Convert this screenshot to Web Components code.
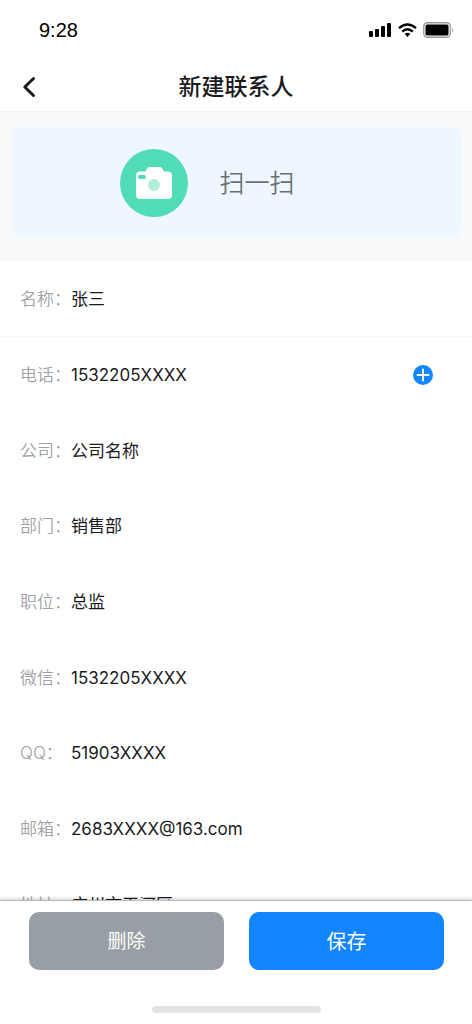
<!DOCTYPE html>
<html lang="zh-CN">
<head>
<meta charset="utf-8">
<meta name="viewport" content="width=device-width, initial-scale=1">
<title>新建联系人</title>
<style>
  html, body { margin: 0; height: 100%; }
  body { background: #fff; color: #1b1b1d; font-family: Inter, "Noto Sans CJK SC", sans-serif; }
</style>
</head>
<body>
<contact-page></contact-page>

<script>
const define = (name, html, setup) => customElements.define(name, class extends HTMLElement {
  connectedCallback() {
    if (this.shadowRoot) return;
    const template = document.createElement('template');
    template.innerHTML = html;
    this.attachShadow({ mode: 'open' }).append(template.content.cloneNode(true));
    if (setup) setup(this, this.shadowRoot);
  }
});

define('status-bar', `
  <style>
    :host { display: flex; align-items: center; justify-content: space-between; height: 60px;
      padding: 0 18px 0 39px; box-sizing: border-box; color: #000;
      font: 20px/24px "Liberation Sans", sans-serif; }
    .icons { display: flex; align-items: center; gap: 6px; }
    svg { display: block; }
  </style>
  <span>9:28</span>
  <div class="icons">
    <svg width="23" height="15" viewBox="0 0 23 15"><rect x="0" y="8" width="4" height="6" rx="1"/><rect x="6" y="6" width="4" height="8" rx="1"/><rect x="12" y="3" width="4" height="11" rx="1"/><rect x="18" y="0" width="4" height="14" rx="1"/></svg>
    <svg width="19" height="15" viewBox="0 0 19 15" fill="none" stroke="#000" stroke-width="2.400"><path d="M1 5.200Q9.500-2.200 18 5.200"/><path d="M4.200 8.700Q9.500 4 14.800 8.700"/><path d="M6.600 10.800Q9.500 8.700 12.400 10.800L9.500 14Z" fill="#000" stroke="none"/></svg>
    <svg width="31" height="16" viewBox="0 0 31 16"><rect x=".75" y=".75" width="26.500" height="14.500" rx="3.500" fill="none" stroke="#999" stroke-width="1.300"/><rect x="2.500" y="2.500" width="23" height="11" rx="1.500"/><path d="M29 5.500Q31 8 29 10.500Z" fill="#999"/></svg>
  </div>`);

define('nav-header', `
  <style>
    :host { display: grid; grid-template-columns: 60px 1fr 60px; align-items: center; height: 51px;
      padding-top: 2px; box-sizing: border-box; }
    button { display: flex; align-items: center; width: 60px; height: 48px; padding: 0 0 0 22px;
      border: 0; background: none; color: inherit; }
    h1 { margin: 0; text-align: center; font-size: 23px; line-height: 32px; font-weight: 500; }
  </style>
  <button type="button" aria-label="返回"><svg width="14" height="22" viewBox="0 0 14 22" fill="none" stroke="currentColor" stroke-width="3" stroke-linecap="round" stroke-linejoin="round"><path d="M11.500 2.500L2.800 11L11.500 19.500"/></svg></button>
  <h1><slot></slot></h1>`);

define('scan-card', `
  <style>
    :host { display: block; padding: 15px 11px 23px 12px; background: #f7f9fa; border-top: 1px solid #f1f3f4; }
    button { display: flex; align-items: center; justify-content: center; gap: 31px; width: 100%;
      height: 111px; padding: 0 58px 0 0; border: 0; border-radius: 10px;
      background: #eef6ff; color: #6b6f73; font: inherit; font-size: 25px; font-weight: 350; line-height: 36px; }
    svg { display: block; }
  </style>
  <button type="button">
    <svg width="68" height="68" viewBox="0 0 68 68"><circle cx="34" cy="34" r="34" fill="#50dcb6"/><path d="M20 22.500H24.500Q26 22.500 26.500 20.500Q27 18 29 18H40Q42 18 42.800 20.500Q43.500 22.500 45 22.500H48Q52 22.500 52 26.500V46Q52 50 48 50H20Q16 50 16 46V26.500Q16 22.500 20 22.500Z" fill="#fff"/><rect x="18" y="26" width="8" height="4" rx="2" fill="#50dcb6"/><circle cx="34" cy="36" r="6" fill="#b4eddb"/></svg>
    <span><slot></slot></span>
  </button>`);

define('contact-field', `
  <style>
    :host { display: flex; align-items: center; padding: 1px 39px 0 20px; box-sizing: border-box; }
    :host([divided]) { border-bottom: 1px solid #f8f8f9; }
    label { flex: 0 0 51px; white-space: nowrap; color: #a0a2a6; font-size: 17px; font-weight: 350; line-height: 26px; }
    .colon { font-family: "Noto Sans CJK SC", sans-serif; line-height: 1; }
    input { flex: 1; min-width: 0; height: 28px; margin: 0; padding: 0; border: 0; outline: 0;
      background: none; color: inherit; font: inherit; font-size: 17px; line-height: 28px; }
  </style>
  <label for="value"><span class="name"></span><span class="colon">：</span></label><input id="value"><slot></slot>`,
  (host, root) => {
    root.querySelector('.name').textContent = host.getAttribute('label');
    const input = root.querySelector('input');
    input.type = host.getAttribute('type') || 'text';
    input.value = host.getAttribute('value');
  });

define('add-button', `
  <style>
    :host { display: block; }
    button { display: block; padding: 0; border: 0; background: none; }
    svg { display: block; }
  </style>
  <button type="button" aria-label="添加电话"><svg width="20" height="20" viewBox="0 0 20 20"><circle cx="10" cy="10" r="10" fill="#1285ff"/><path d="M10 4.500V15.500M4.500 10H15.500" stroke="#fff" stroke-width="2" stroke-linecap="round"/></svg></button>`);

define('action-button', `
  <style>
    :host { display: block; flex: 1; }
    button { display: block; width: 100%; height: 58px; padding: 2px 0 0; border: 0; border-radius: 10px;
      background: #989ea5; color: #fff; font: inherit; font-size: 19px; line-height: 28px; }
    :host([primary]) button { background: #1285ff; font-size: 20px; }
  </style>
  <button type="button"><slot></slot></button>`);

define('action-bar', `
  <style>
    :host { display: block; position: relative; padding: 11px 28px 11px 29px; background: #fff;
      border-top: 1px solid #bbb; box-shadow: 0 -1px 4px rgba(0, 0, 0, .2); }
    .buttons { display: flex; gap: 25px; }
    .home { width: 169px; height: 7px; margin: 36px auto 0; border-radius: 4px; background: #e3e3e3; }
  </style>
  <div class="buttons"><slot></slot></div>
  <div class="home"></div>`);

define('contact-page', `
  <style>
    :host { display: flex; flex-direction: column; height: 100vh; overflow: hidden; }
    main { flex: 1; min-height: 0; overflow: hidden auto; scrollbar-width: none; }
    form { display: grid; grid-auto-rows: 1fr; height: 681px; }
  </style>
  <status-bar></status-bar>
  <nav-header>新建联系人</nav-header>
  <main>
    <scan-card>扫一扫</scan-card>
    <form>
      <contact-field label="名称" value="张三" divided></contact-field>
      <contact-field label="电话" value="1532205XXXX" type="tel"><add-button></add-button></contact-field>
      <contact-field label="公司" value="公司名称"></contact-field>
      <contact-field label="部门" value="销售部"></contact-field>
      <contact-field label="职位" value="总监"></contact-field>
      <contact-field label="微信" value="1532205XXXX"></contact-field>
      <contact-field label="QQ" value="51903XXXX"></contact-field>
      <contact-field label="邮箱" value="2683XXXX@163.com" type="email"></contact-field>
      <contact-field label="地址" value="广州市天河区"></contact-field>
    </form>
  </main>
  <action-bar>
    <action-button>删除</action-button>
    <action-button primary>保存</action-button>
  </action-bar>`);
</script>
</body>
</html>
